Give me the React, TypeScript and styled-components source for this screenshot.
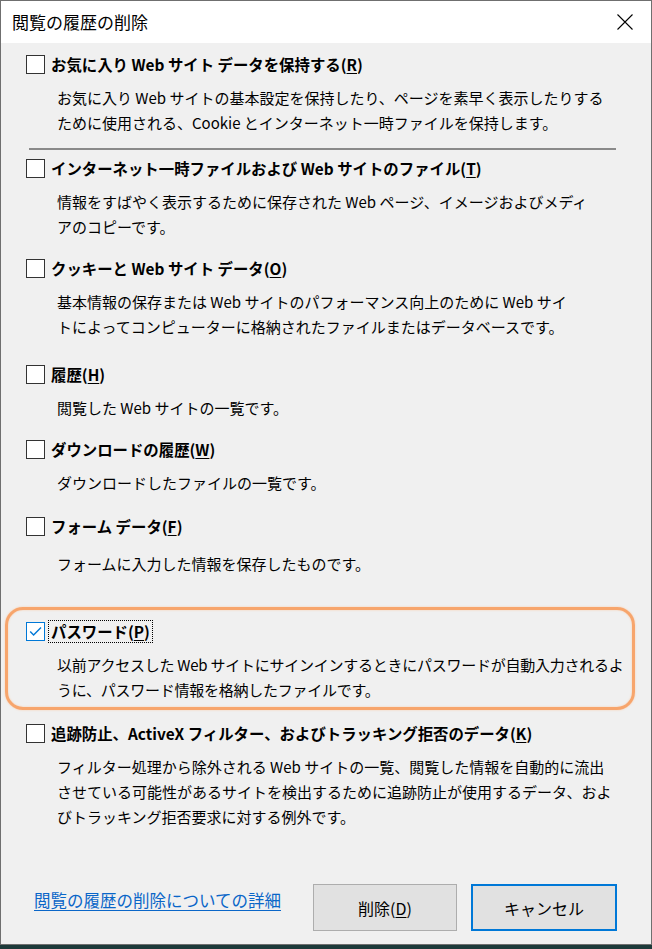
import React from 'react';
import styled, { createGlobalStyle } from 'styled-components';

const GlobalStyle = createGlobalStyle`
  html, body {
    margin: 0;
    padding: 0;
    background: #1d3a3a;
  }
  body {
    font-family: "Noto Sans CJK JP", "Noto Sans", sans-serif;
    color: #000;
  }
`;

type OptionProps = {
  label: string;
  accessKey: string;
  lines: string[];
  checked?: boolean;
  focused?: boolean;
  top?: number;
  descGap?: number;
};

function Option({ label, accessKey, lines, checked, focused, top = 0, descGap = 11 }: OptionProps) {
  return (
    <OptionContainer $top={top}>
      <div className="label-row">
        <CheckBox $checked={!!checked}>
          {checked && (
            <svg width="17" height="17" viewBox="0 0 17 17">
              <path d="M3.2 8.6 L6.6 12 L14 4.4" fill="none" stroke="#0078d7" strokeWidth="1.4" />
            </svg>
          )}
        </CheckBox>
        <OptionLabel $focused={!!focused}>
          {label}(<u>{accessKey}</u>)
        </OptionLabel>
      </div>
      <Description className="description" $gap={descGap}>
        {lines.map((line) => (
          <div key={line}>{line}</div>
        ))}
      </Description>
    </OptionContainer>
  );
}

export default function App() {
  return (
    <>
      <GlobalStyle />
      <Window>
        <TitleBar>
          <span className="title">閲覧の履歴の削除</span>
          <svg className="close" width="16" height="16" viewBox="0 0 16 16">
            <path d="M0.5 0.5 L15.5 15.5 M15.5 0.5 L0.5 15.5" stroke="#000" strokeWidth="1.1" />
          </svg>
        </TitleBar>

        <Content>
          <Option
            top={11}
            label="お気に入り Web サイト データを保持する"
            accessKey="R"
            lines={[
              'お気に入り Web サイトの基本設定を保持したり、ページを素早く表示したりする',
              'ために使用される、Cookie とインターネット一時ファイルを保持します。',
            ]}
          />

          <Separator />

          <Option
            top={8}
            label="インターネット一時ファイルおよび Web サイトのファイル"
            accessKey="T"
            lines={[
              '情報をすばやく表示するために保存された Web ページ、イメージおよびメディ',
              'アのコピーです。',
            ]}
          />

          <Option
            top={19}
            label="クッキーと Web サイト データ"
            accessKey="O"
            lines={[
              '基本情報の保存または Web サイトのパフォーマンス向上のために Web サイ',
              'トによってコンピューターに格納されたファイルまたはデータベースです。',
            ]}
          />

          <Option top={25} label="履歴" accessKey="H" lines={['閲覧した Web サイトの一覧です。']} />

          <Option
            top={19}
            label="ダウンロードの履歴"
            accessKey="W"
            lines={['ダウンロードしたファイルの一覧です。']}
          />

          <Option
            top={21}
            descGap={15}
            label="フォーム データ"
            accessKey="F"
            lines={['フォームに入力した情報を保存したものです。']}
          />

          <Highlight>
            <Option
              checked
              focused
              label="パスワード"
              accessKey="P"
              lines={[
                '以前アクセスした Web サイトにサインインするときにパスワードが自動入力されるよ',
                'うに、パスワード情報を格納したファイルです。',
              ]}
            />
          </Highlight>

          <Option
            top={13}
            label="追跡防止、ActiveX フィルター、およびトラッキング拒否のデータ"
            accessKey="K"
            lines={[
              'フィルター処理から除外される Web サイトの一覧、閲覧した情報を自動的に流出',
              'させている可能性があるサイトを検出するために追跡防止が使用するデータ、およ',
              'びトラッキング拒否要求に対する例外です。',
            ]}
          />
        </Content>

        <Footer>
          <a className="link" href="#">
            閲覧の履歴の削除についての詳細
          </a>
          <div className="buttons">
            <DialogButton>
              削除(<u>D</u>)
            </DialogButton>
            <DialogButton $primary>キャンセル</DialogButton>
          </div>
        </Footer>
      </Window>
    </>
  );
}

const Window = styled.div`
  width: 650px;
  height: 943px;
  border: 1px solid #6f6f6f;
  background: #f0f0f0;
  display: flex;
  flex-direction: column;
`;

const TitleBar = styled.div`
  height: 42px;
  background: #fff;
  display: flex;
  align-items: center;
  justify-content: space-between;
  padding: 0 18px 0 11px;

  .title {
    font-size: 17px;
    line-height: 20px;
  }

  .close {
    display: block;
  }
`;

const Content = styled.div`
  padding: 0 16px 0 25px;
  display: flex;
  flex-direction: column;
`;

const OptionContainer = styled.div<{ $top: number }>`
  margin-top: ${(p) => p.$top}px;

  .label-row {
    height: 20px;
    display: flex;
    align-items: center;
    gap: 3px;
  }
`;

const CheckBox = styled.div<{ $checked: boolean }>`
  width: 17px;
  height: 17px;
  flex: none;
  border: 1px solid ${(p) => (p.$checked ? '#0078d7' : '#333')};
  background: #fff;
  display: flex;
  align-items: center;
  justify-content: center;
`;

const OptionLabel = styled.span<{ $focused: boolean }>`
  font-size: 15.4px;
  font-weight: bold;
  line-height: 19px;
  padding: 1px 2px;
  border: 1px dotted ${(p) => (p.$focused ? '#000' : 'transparent')};
  white-space: nowrap;

  u {
    text-underline-offset: 2px;
  }
`;

const Description = styled.div<{ $gap: number }>`
  margin-top: ${(p) => p.$gap}px;
  padding-left: 31px;
  font-size: 15px;
  line-height: 25px;
  white-space: nowrap;
`;

const Separator = styled.div`
  height: 2px;
  background: #8a8a8a;
  margin: 13px 19px 0 3px;
`;

const Highlight = styled.div`
  margin: 31px 0 0 -21px;
  padding: 11px 0 5px 18px;
  border: 3px solid #f7a56c;
  border-radius: 18px;
  box-shadow: 0 0 2px #fbc9a3, inset 0 0 2px #fbc9a3;

  .description {
    letter-spacing: -0.25px;
  }
`;

const Footer = styled.div`
  margin-top: 55px;
  padding: 0 34px 0 33px;
  display: flex;
  justify-content: space-between;
  align-items: flex-start;

  .link {
    margin-top: 5px;
    font-size: 16.5px;
    line-height: 22px;
    color: #0a66c8;
    text-decoration: underline;
    text-underline-offset: 3px;
  }

  .buttons {
    display: flex;
    gap: 14px;
  }
`;

const DialogButton = styled.button<{ $primary?: boolean }>`
  width: ${(p) => (p.$primary ? '146px' : '144px')};
  height: 47px;
  box-sizing: border-box;
  background: #e1e1e1;
  border: ${(p) => (p.$primary ? '2px solid #0078d7' : '1px solid #adadad')};
  font-family: inherit;
  font-size: 16px;
  color: #000;
  padding: 0;

  u {
    text-underline-offset: 2px;
  }
`;
